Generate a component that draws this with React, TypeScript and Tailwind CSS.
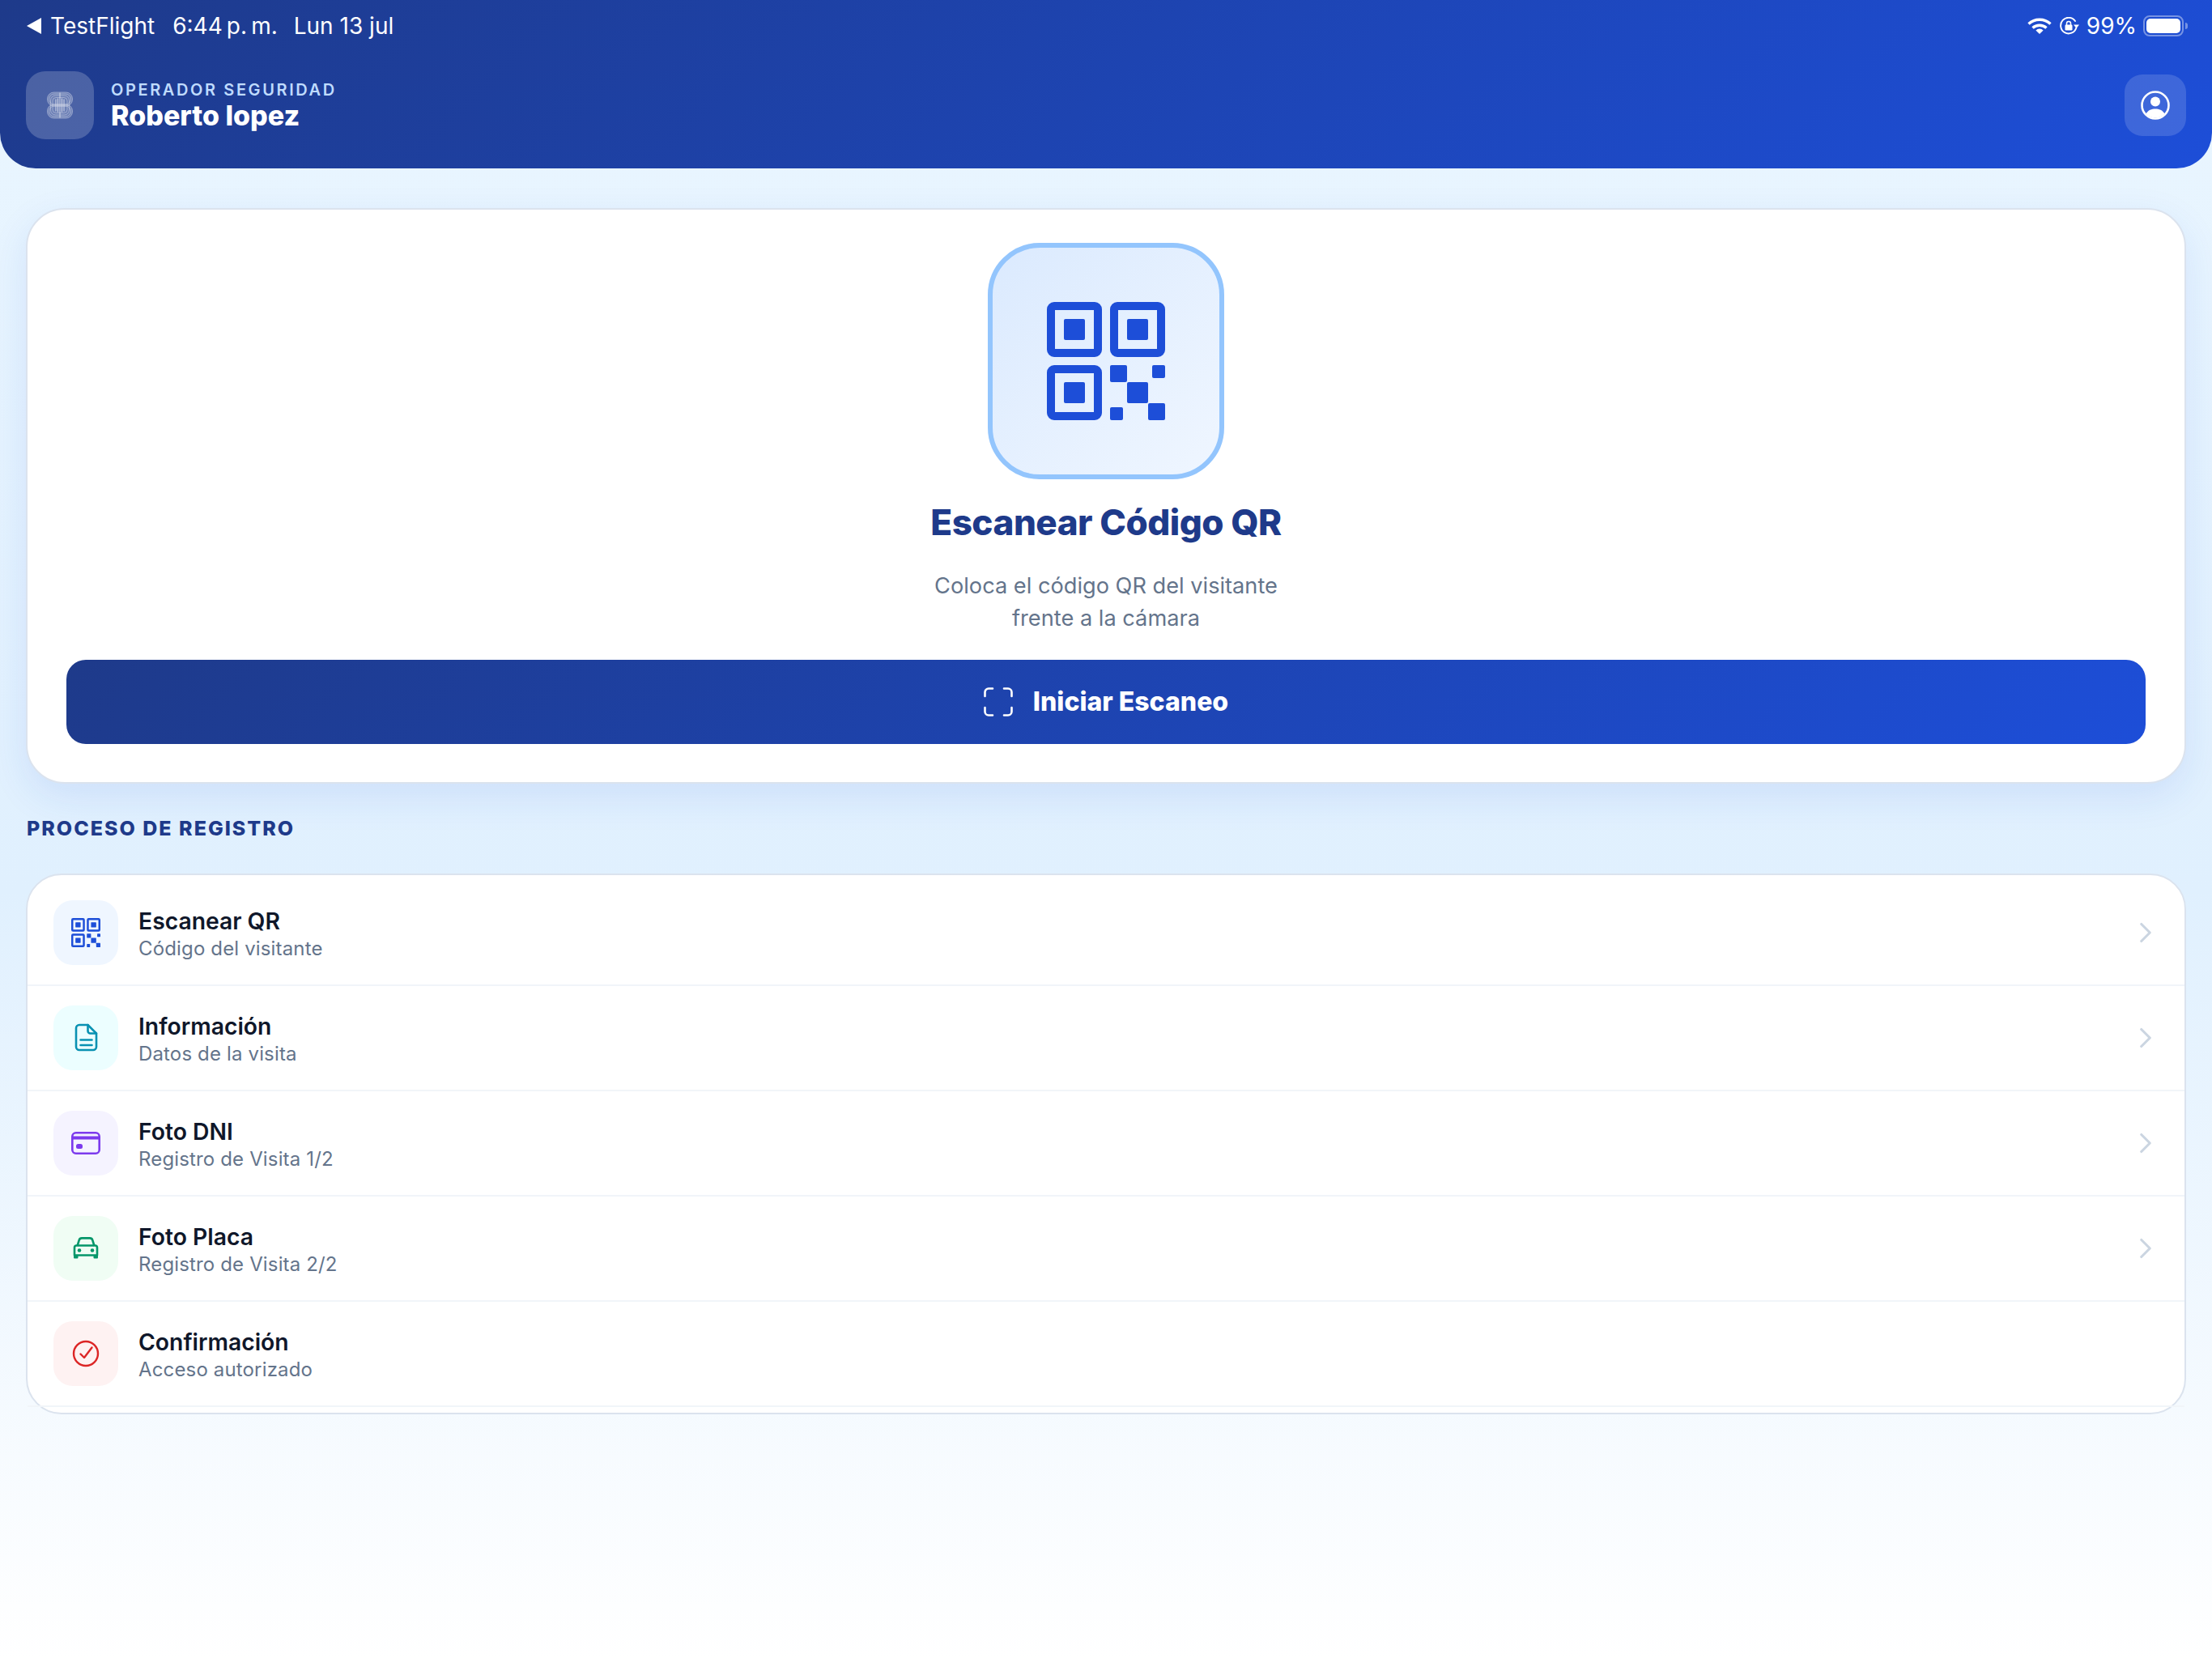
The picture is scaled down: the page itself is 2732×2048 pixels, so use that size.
import React from 'react'
import { ChevronRight } from 'lucide-react'

const QrIcon = ({ className }: { className: string }) => (
  <svg viewBox="0 0 146 146" className={className} fill="currentColor">
    <rect x="5" y="5" width="58" height="58" rx="4" fill="none" stroke="currentColor" strokeWidth="10" />
    <rect x="83" y="5" width="58" height="58" rx="4" fill="none" stroke="currentColor" strokeWidth="10" />
    <rect x="5" y="83" width="58" height="58" rx="4" fill="none" stroke="currentColor" strokeWidth="10" />
    <rect x="21" y="21" width="26" height="26" rx="2" />
    <rect x="99" y="21" width="26" height="26" rx="2" />
    <rect x="21" y="99" width="26" height="26" rx="2" />
    <rect x="78" y="78" width="21" height="21" rx="2" />
    <rect x="130" y="78" width="16" height="16" rx="2" />
    <rect x="99" y="99" width="26" height="26" rx="2" />
    <rect x="125" y="125" width="21" height="21" rx="2" />
    <rect x="78" y="130" width="16" height="16" rx="2" />
  </svg>
)

const DocIcon = ({ className }: { className: string }) => (
  <svg viewBox="0 0 36 36" className={className} fill="none" stroke="currentColor" strokeWidth="2.6" strokeLinecap="round" strokeLinejoin="round">
    <path d="M10 2h10.5L31 12.5V29a4 4 0 0 1-4 4H10a4 4 0 0 1-4-4V6a4 4 0 0 1 4-4z" />
    <path d="M20.5 2v7.5a3 3 0 0 0 3 3H31" />
    <path d="M11.5 20.5h14M11.5 27h14" />
  </svg>
)

const CardIcon = ({ className }: { className: string }) => (
  <svg viewBox="0 0 36 36" className={className} fill="none" stroke="currentColor" strokeWidth="2.6">
    <rect x="1.3" y="5.3" width="33.4" height="25.4" rx="4.5" />
    <rect x="1.5" y="9.5" width="33" height="4" fill="currentColor" stroke="none" />
    <rect x="6" y="19" width="8" height="6" rx="2.5" fill="currentColor" stroke="none" />
  </svg>
)

const CarIcon = ({ className }: { className: string }) => (
  <svg viewBox="0 0 36 36" className={className} fill="none" stroke="currentColor" strokeWidth="2.6" strokeLinejoin="round">
    <path d="M7.5 15l2.2-7.2A3.5 3.5 0 0 1 13 5.4h10a3.5 3.5 0 0 1 3.3 2.4L28.5 15" />
    <path d="M6.5 14.5h23a2.5 2.5 0 0 1 2.5 2.5v9.500H4V17a2.500 2.500 0 0 1 2.500-2.500z" />
    <rect x="3" y="26" width="5.500" height="4.500" rx="1" fill="currentColor" stroke="none" />
    <rect x="27.500" y="26" width="5.500" height="4.500" rx="1" fill="currentColor" stroke="none" />
    <circle cx="10" cy="20.500" r="2.300" fill="currentColor" stroke="none" />
    <circle cx="26" cy="20.500" r="2.300" fill="currentColor" stroke="none" />
  </svg>
)

const CheckIcon = ({ className }: { className: string }) => (
  <svg viewBox="0 0 36 36" className={className} fill="none" stroke="currentColor" strokeWidth="2.400" strokeLinecap="round" strokeLinejoin="round">
    <circle cx="18" cy="18" r="15" />
    <path d="M11.500 18.500l4.500 4.500 9.500-12.500" />
  </svg>
)

const ScanIcon = () => (
  <svg viewBox="0 0 36 36" className="w-9 h-9 text-white" fill="none" stroke="currentColor" strokeWidth="2.600" strokeLinecap="round">
    <path d="M1.500 11V6A4.500 4.500 0 0 1 6 1.500h5" />
    <path d="M25 1.500h5A4.500 4.500 0 0 1 34.500 6v5" />
    <path d="M34.500 25v5a4.500 4.500 0 0 1-4.500 4.500h-5" />
    <path d="M11 34.500H6A4.500 4.500 0 0 1 1.500 30v-5" />
  </svg>
)

const PersonIcon = () => (
  <svg viewBox="0 0 36 36" className="w-9 h-9 text-white" fill="currentColor">
    <circle cx="18" cy="18" r="16.500" fill="none" stroke="currentColor" strokeWidth="2.600" />
    <circle cx="18" cy="13.500" r="6" />
    <path d="M6.500 28.500C9 24 13.500 22.500 18 22.500s9 1.500 11.500 6A15.500 15.500 0 0 1 6.500 28.500z" />
  </svg>
)

const LogoIcon = () => (
  <svg viewBox="0 0 32 34" className="w-8 h-[34px] text-white" fill="none" stroke="currentColor" strokeWidth="0.500" opacity="0.75">
    <rect x="0.5" y="1" width="31" height="17" rx="8" fill="currentColor" fillOpacity="0.25" />
    <rect x="0.5" y="16" width="31" height="17" rx="8" fill="currentColor" fillOpacity="0.25" />
    <rect x="2.500" y="3" width="27" height="13" rx="6.500" />
    <rect x="2.500" y="18" width="27" height="13" rx="6.500" />
    <rect x="4.500" y="5" width="23" height="24" rx="6" />
    <rect x="7" y="7.500" width="18" height="19" rx="4" />
    <path d="M11 9.500v15M13.500 8.500v17M16 1.500v31M18.500 8.500v17M21 9.500v15" strokeWidth="1" />
  </svg>
)

const WifiIcon = () => (
  <svg viewBox="0 0 30 20" className="w-[30px] h-5 text-white" fill="none" stroke="currentColor" strokeWidth="3.400">
    <path d="M1.500 7.500C9 .5 21 .5 28.500 7.500" />
    <path d="M6.500 12.500c4.800-4.400 12.200-4.400 17 0" />
    <path d="M15 20l-4.600-4.600a6.500 6.500 0 0 1 9.200 0z" fill="currentColor" stroke="none" />
  </svg>
)

const RotationLockIcon = () => (
  <svg viewBox="0 0 24 22" className="w-6 h-[22px] text-white" fill="none" stroke="currentColor" strokeWidth="1.900">
    <path d="M20.300 13.500A9.800 9.800 0 1 1 19 5" strokeLinecap="round" />
    <path d="M17 9.500h7l-3.500 4.500z" fill="currentColor" stroke="none" />
    <rect x="6.500" y="9.500" width="9" height="7" rx="1.200" fill="currentColor" stroke="none" />
    <path d="M8.500 10V8a2.500 2.500 0 0 1 5 0v2" strokeWidth="1.500" />
  </svg>
)

const steps = [
  { title: 'Escanear QR', sub: 'Código del visitante', Icon: QrIcon, box: 'bg-[#eff6ff]', color: 'text-[#1d4ed8]', arrow: true },
  { title: 'Información', sub: 'Datos de la visita', Icon: DocIcon, box: 'bg-[#ecfeff]', color: 'text-[#0891b2]', arrow: true },
  { title: 'Foto DNI', sub: 'Registro de Visita 1/2', Icon: CardIcon, box: 'bg-[#f5f3ff]', color: 'text-[#7c3aed]', arrow: true },
  { title: 'Foto Placa', sub: 'Registro de Visita 2/2', Icon: CarIcon, box: 'bg-[#f0fdf4]', color: 'text-[#059669]', arrow: true },
  { title: 'Confirmación', sub: 'Acceso autorizado', Icon: CheckIcon, box: 'bg-[#fef2f2]', color: 'text-[#dc2626]', arrow: false },
]

const App = () => {
  return (
    <div className="w-[2732px] h-[2048px] overflow-hidden flex flex-col font-['Inter',sans-serif] bg-[linear-gradient(180deg,#eaf6ff_0px,#e0f0fe_1100px,#ffffff_2048px)]">
      <header className="h-[208px] shrink-0 rounded-b-[44px] flex flex-col bg-[linear-gradient(135deg,#1e3a8a,#1d4ed8)]">
        <div className="h-[64px] pl-[33px] pr-[30px] flex items-center justify-between text-white text-[28px] leading-none">
          <div className="flex items-center">
            <span className="w-0 h-0 border-y-[10px] border-y-transparent border-r-[18px] border-r-white mr-[11px]"></span>
            <span>TestFlight</span>
            <span className="ml-[22px]">{'6:44\u2009p.\u2009m.'}</span>
            <span className="ml-[20px]">Lun 13 jul</span>
          </div>
          <div className="flex items-center">
            <WifiIcon />
            <span className="ml-[10px]"><RotationLockIcon /></span>
            <span className="ml-[9px]">99%</span>
            <div className="ml-[8px] w-[50px] h-[26px] rounded-[8px] border-2 border-white/40 p-[2px]">
              <div className="w-full h-full rounded-[5px] bg-white"></div>
            </div>
            <div className="w-[3px] h-[8px] ml-[2px] rounded-r-full bg-white/40"></div>
          </div>
        </div>
        <div className="mt-[24px] px-[32px] flex items-center justify-between">
          <div className="flex items-center gap-[21px]">
            <div className="w-[84px] h-[84px] rounded-[24px] bg-white/20 flex items-center justify-center">
              <LogoIcon />
            </div>
            <div className="flex flex-col pt-[2px]">
              <span className="text-[20px] leading-[24px] font-semibold tracking-[2.6px] text-[#bfdbfe]">OPERADOR SEGURIDAD</span>
              <span className="text-[34px] leading-[40px] font-extrabold text-white">Roberto lopez</span>
            </div>
          </div>
          <div className="w-[76px] h-[76px] rounded-[22px] bg-white/15 flex items-center justify-center">
            <PersonIcon />
          </div>
        </div>
      </header>

      <main className="px-[32px] pt-[49px] flex flex-col">
        <section className="h-[711px] rounded-[48px] bg-white border-2 border-[#dbe3ee] px-[48px] pt-[41px] flex flex-col items-center shadow-[0_16px_48px_rgba(29,78,216,0.10)]">
          <div className="w-[292px] h-[292px] rounded-[64px] border-[6px] border-[#93c5fd] bg-[linear-gradient(135deg,#dbeafe,#eff6ff)] flex items-center justify-center">
            <QrIcon className="w-[146px] h-[146px] text-[#1d4ed8]" />
          </div>
          <h1 className="mt-[26px] text-[44px] leading-[54px] font-extrabold tracking-[-0.5px] text-[#1e3a8a]">Escanear Código QR</h1>
          <p className="mt-[32px] text-[27.2px] leading-[40px] text-center text-[#64748b]">
            Coloca el código QR del visitante<br />frente a la cámara
          </p>
          <button className="mt-[31px] w-full h-[104px] rounded-[24px] flex items-center justify-center gap-[25px] bg-[linear-gradient(135deg,#1e3a8a,#1d4ed8)]">
            <ScanIcon />
            <span className="text-[32px] font-extrabold text-white">Iniciar Escaneo</span>
          </button>
        </section>

        <h2 className="mt-[43px] pl-[1px] text-[25px] leading-[24px] font-extrabold tracking-[2px] text-[#1e3a8a]">PROCESO DE REGISTRO</h2>

        <section className="mt-[44px] rounded-[44px] bg-white border-2 border-[#dbe3ee] py-[7px]">
          {steps.map(({ title, sub, Icon, box, color, arrow }) => (
            <div key={title} className="h-[130px] pl-[32px] pr-[27px] flex items-center border-b-2 border-[#f1f5f9]">
              <div className={`w-[80px] h-[80px] rounded-[24px] flex items-center justify-center ${box}`}>
                <Icon className={`w-9 h-9 ${color}`} />
              </div>
              <div className="ml-[25px] pt-[5px] flex-1 flex flex-col">
                <span className="text-[28.3px] leading-[34px] font-semibold text-[#0f172a]">{title}</span>
                <span className="text-[24px] leading-[33px] tracking-[0.15px] text-[#64748b]">{sub}</span>
              </div>
              {arrow && <ChevronRight className="w-[42px] h-[42px] text-[#cbd5e1]" strokeWidth={1.8} />}
            </div>
          ))}
        </section>
      </main>
    </div>
  )
}

export default App
